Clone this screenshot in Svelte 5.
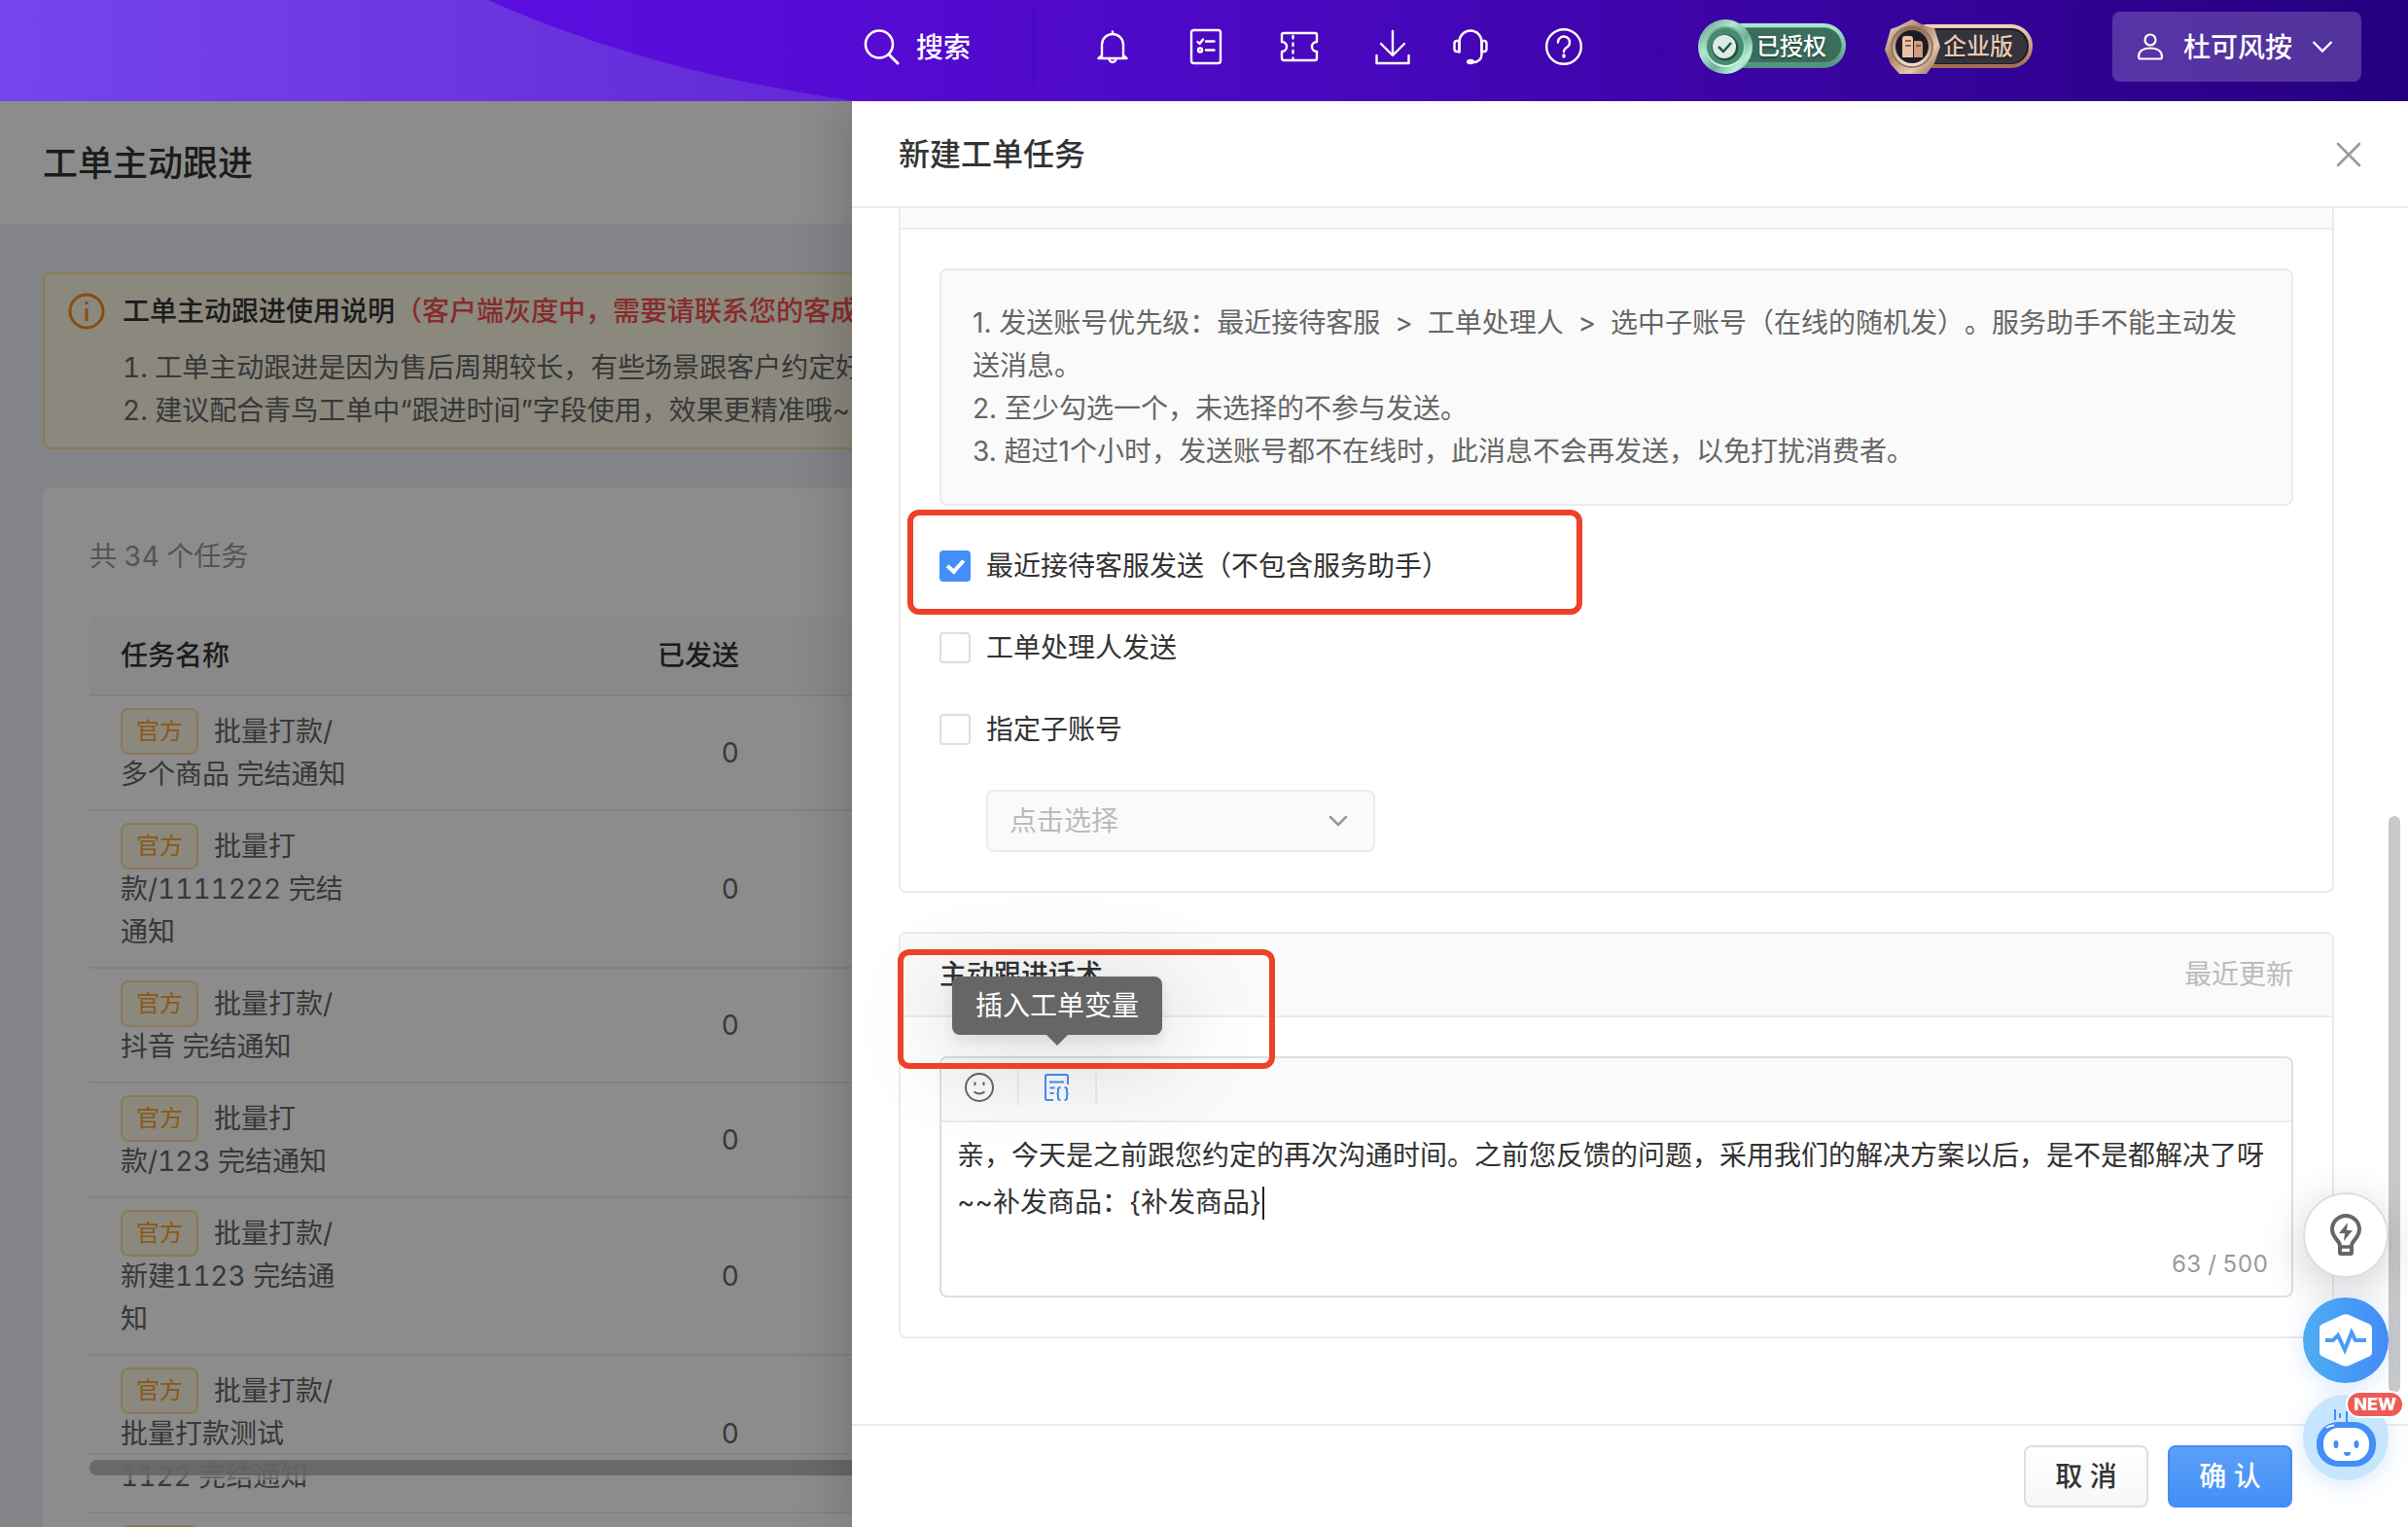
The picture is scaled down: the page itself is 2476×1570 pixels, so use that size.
<script lang="ts">
	const tasks = [
		{ name: '批量打款/多个商品 完结通知', sent: 0 },
		{ name: '批量打款/1111222 完结通知', sent: 0 },
		{ name: '批量打款/抖音 完结通知', sent: 0 },
		{ name: '批量打款/123 完结通知', sent: 0 },
		{ name: '批量打款/新建1123 完结通知', sent: 0 },
		{ name: '批量打款/批量打款测试 1122 完结通知', sent: 0 },
		{ name: '批量打款/', sent: 0 }
	];

	let senders = $state([
		{ label: '最近接待客服发送（不包含服务助手）', checked: true },
		{ label: '工单处理人发送', checked: false },
		{ label: '指定子账号', checked: false }
	]);

	let message = $state(
		'亲，今天是之前跟您约定的再次沟通时间。之前您反馈的问题，采用我们的解决方案以后，是不是都解决了呀\n~~补发商品：{补发商品} '
	);
	let count = $derived(message.length);
</script>

<div class="app">
	<header class="topbar">
		<svg class="swoosh" viewBox="0 0 880 104" preserveAspectRatio="none" aria-hidden="true">
			<defs>
				<linearGradient id="swoosh" x1="0" x2="1" y1="0" y2="0">
					<stop offset="0" stop-color="#7645ec" />
					<stop offset="1" stop-color="#6228d6" />
				</linearGradient>
			</defs>
			<path d="M0 0H502C610 48 735 84 880 104H0Z" fill="url(#swoosh)" />
		</svg>

		<button class="search">
			<svg width="38" height="38" viewBox="0 0 38 38" fill="none" stroke="#fff" stroke-width="2.6" stroke-linecap="round">
				<circle cx="16" cy="16.500" r="14" />
				<path d="M26 27l9 9" stroke-width="3" />
			</svg>
			<span>搜索</span>
		</button>
		<span class="divider first"></span>

		<nav class="tools">
			<button aria-label="通知">
				<svg viewBox="0 0 40 40">
					<path d="M20 4.500v2M5.500 32h29M9 32V18a11 11 0 0 1 22 0v14M5.500 32l3.500-3M34.500 32L31 29M16.500 32.500a3.500 3.500 0 0 0 7 0" />
				</svg>
			</button>
			<button aria-label="任务">
				<svg viewBox="0 0 40 40">
					<rect x="5" y="3" width="30" height="34" rx="2.500" />
					<path d="M11.500 15l2 2 3.500-4.500M20 14.500h8.500M20 23.500h8.500" />
					<circle cx="14" cy="23.500" r="2" />
				</svg>
			</button>
			<button aria-label="卡券">
				<svg viewBox="0 0 40 40">
					<path d="M4 6h32a2 2 0 0 1 2 2v7a5 5 0 0 0 0 10v7a2 2 0 0 1-2 2H4a2 2 0 0 1-2-2v-7a5 5 0 0 0 0-10V8a2 2 0 0 1 2-2Z" />
					<path d="M13.500 9v23" stroke-dasharray="2.500 5" />
				</svg>
			</button>
			<button aria-label="下载">
				<svg viewBox="0 0 40 40">
					<path d="M20 4v24M8 17l12 12 12-12M3.500 29v8h33v-8" />
				</svg>
			</button>
			<button class="near" aria-label="客服">
				<svg viewBox="0 0 40 40">
					<path d="M8.500 25.500V15a11.500 11.500 0 0 1 23 0v13a8 8 0 0 1-8 8" />
					<path d="M8.500 14H6a2.500 2.500 0 0 0-2.500 2.500v6A2.500 2.500 0 0 0 6 25h2.500zM31.500 14H34a2.500 2.500 0 0 1 2.500 2.500v6A2.500 2.500 0 0 1 34 25h-2.500z" />
					<ellipse cx="20" cy="35.500" rx="2.800" ry="1.500" fill="#fff" />
				</svg>
			</button>
			<button aria-label="帮助">
				<svg viewBox="0 0 40 40">
					<circle cx="20" cy="20" r="17.800" />
					<path d="M14 15.500a6 6 0 1 1 9 5.200c-2 1.200-3 2.200-3 4.500" />
					<path d="M20 29v1" stroke-width="3.500" />
				</svg>
			</button>
		</nav>
		<span class="divider second"></span>

		<div class="medal">
			<svg width="152" height="56" viewBox="0 0 152 56" aria-hidden="true">
				<defs>
					<linearGradient id="gRim" x1="0" x2="0" y1="0" y2="1">
						<stop offset="0" stop-color="#a9eccf" />
						<stop offset="1" stop-color="#4f8e77" />
					</linearGradient>
					<linearGradient id="gRing" x1="0" x2="1" y1="0" y2="1">
						<stop offset="0" stop-color="#4f9077" />
						<stop offset="0.35" stop-color="#b4e8d0" />
						<stop offset="0.6" stop-color="#6bb095" />
						<stop offset="0.8" stop-color="#b8f0d8" />
						<stop offset="1" stop-color="#45846d" />
					</linearGradient>
					<linearGradient id="gInner" x1="0" x2="0" y1="0" y2="1">
						<stop offset="0" stop-color="#6aa78f" />
						<stop offset="1" stop-color="#d2fbe9" />
					</linearGradient>
				</defs>
				<rect x="22" y="4" width="130" height="46" rx="23" fill="url(#gRim)" />
				<rect x="22" y="8" width="126" height="38" rx="19" fill="#56967f" />
				<rect x="22" y="9" width="125" height="35" rx="17" fill="#3b6d5d" />
				<circle cx="28" cy="28" r="28" fill="url(#gRing)" />
				<circle cx="28" cy="28" r="21" fill="url(#gInner)" />
				<circle cx="28" cy="28" r="19" fill="#468a70" />
				<circle cx="28" cy="29" r="13.500" fill="#24503f" />
				<circle cx="27" cy="28" r="12" fill="#dcebe6" />
				<path d="M21 28l5 5 8-9" fill="none" stroke="#2c5647" stroke-width="2.500" />
			</svg>
			<span>已授权</span>
		</div>
		<div class="medal bronze">
			<svg width="152" height="56" viewBox="0 0 152 56" aria-hidden="true">
				<defs>
					<linearGradient id="bRim" x1="0" x2="0" y1="0" y2="1">
						<stop offset="0" stop-color="#f0d6c0" />
						<stop offset="1" stop-color="#a1694c" />
					</linearGradient>
					<linearGradient id="bRing" x1="0" x2="1" y1="0" y2="1">
						<stop offset="0" stop-color="#f6e6d6" />
						<stop offset="0.4" stop-color="#a88367" />
						<stop offset="0.7" stop-color="#e5cbb2" />
						<stop offset="1" stop-color="#80583f" />
					</linearGradient>
					<linearGradient id="bInner" x1="0" x2="0" y1="0" y2="1">
						<stop offset="0" stop-color="#8d674f" />
						<stop offset="1" stop-color="#f3e4d4" />
					</linearGradient>
				</defs>
				<rect x="22" y="5" width="130" height="45" rx="22" fill="url(#bRim)" />
				<rect x="22" y="9" width="126" height="37" rx="18" fill="#1f1d24" />
				<rect x="22" y="11" width="124" height="34" rx="17" fill="#34343c" />
				<path d="M28 0L42 7 51 9 57 28 51 45 43 56H15L6 46 0 31 6 10 14 7Z" fill="url(#bRing)" />
				<circle cx="28" cy="28" r="22" fill="#9a765d" />
				<circle cx="28" cy="28" r="20" fill="url(#bInner)" />
				<circle cx="28" cy="28" r="17" fill="#1e1c22" />
				<path d="M18 20q0-3 3-3h5q3 0 3 3v19H18z" fill="#e9c3ab" />
				<path d="M30 22h6q3 0 3 3v14h-9z" fill="#cf9a7e" />
				<path d="M21 22h6M21 27h6M32 27h5" stroke="#6a4431" stroke-width="1.500" />
			</svg>
			<span>企业版</span>
		</div>
		<span class="divider third"></span>

		<button class="user">
			<svg width="28" height="28" viewBox="0 0 28 28" fill="none" stroke="#fff" stroke-width="2.200">
				<circle cx="14" cy="7" r="5.500" />
				<path d="M2 24.500C2 18.500 7 15.500 14 15.500s12 3 12 9q0 2-2 2H4q-2 0-2-2Z" />
			</svg>
			<span>杜可风按</span>
			<svg width="22" height="14" viewBox="0 0 22 14" fill="none" stroke="#fff" stroke-width="2.400">
				<path d="M1.500 2l9.500 9.500L20.500 2" />
			</svg>
		</button>
	</header>

	<div class="stage">
		<main class="page">
			<div class="page-head"><h1>工单主动跟进</h1></div>

			<div class="page-body">
				<section class="alert">
					<svg width="38" height="38" viewBox="0 0 38 38" fill="none" stroke="#fa8c16" stroke-width="3">
						<circle cx="19" cy="19" r="17" />
						<path d="M19 16v13M19 9v3" />
					</svg>
					<div>
						<h2>工单主动跟进使用说明<em>（客户端灰度中，需要请联系您的客成</em></h2>
						<p>1. 工单主动跟进是因为售后周期较长，有些场景跟客户约定好</p>
						<p>2. 建议配合青鸟工单中“跟进时间”字段使用，效果更精准哦~</p>
					</div>
				</section>

				<section class="list">
					<p class="total">共 34 个任务</p>
					<table>
						<thead>
							<tr>
								<th class="col-name">任务名称</th>
								<th class="col-num">已发送</th>
								<th></th>
							</tr>
						</thead>
						<tbody>
							{#each tasks as task}
								<tr>
									<td><div class="name"><span class="tag">官方</span>{task.name}</div></td>
									<td class="col-num">{task.sent}</td>
									<td></td>
								</tr>
							{/each}
						</tbody>
					</table>
				</section>
			</div>

			<div class="hscroll" aria-hidden="true"><div></div></div>
		</main>

		<div class="mask"></div>

		<aside class="drawer">
			<div class="drawer-head">
				<h2>新建工单任务</h2>
				<button aria-label="关闭">
					<svg width="26" height="26" viewBox="0 0 26 26" stroke="#999" stroke-width="2.600" stroke-linecap="round">
						<path d="M2 2l22 22M24 2L2 24" />
					</svg>
				</button>
			</div>

			<div class="drawer-body">
				<section class="panel cut">
					<div class="panel-head"></div>
					<div class="panel-body">
						<div class="hint">
							<p>
								1. 发送账号优先级：最近接待客服 <span class="gt">&gt;</span> 工单处理人 <span class="gt">&gt;</span> 选中子账号（在线的随机发）。服务助手不能主动发送消息。
							</p>
							<p>2. 至少勾选一个，未选择的不参与发送。</p>
							<p>3. 超过1个小时，发送账号都不在线时，此消息不会再发送，以免打扰消费者。</p>
						</div>

						<div class="senders">
							{#each senders as sender, i}
								<div class="sender">
									<label><input type="checkbox" bind:checked={sender.checked} />{sender.label}</label>
									{#if i === 0}<span class="mark mark-sender"></span>{/if}
								</div>
							{/each}
						</div>

						<div class="picker">
							<select disabled aria-label="指定子账号">
								<option>点击选择</option>
							</select>
							<svg width="20" height="14" viewBox="0 0 20 14" fill="none" stroke="#999" stroke-width="2.600" stroke-linecap="round">
								<path d="M2 3l8 8 8-8" />
							</svg>
						</div>
					</div>
				</section>

				<section class="panel">
					<div class="panel-head">
						<h3>主动跟进话术</h3>
						<span>最近更新</span>
					</div>
					<div class="panel-body">
						<div class="editor">
							<div class="toolbar">
								<button aria-label="表情">
									<svg width="32" height="32" viewBox="0 0 32 32" fill="none" stroke="#666" stroke-width="2">
										<circle cx="16" cy="16" r="14" />
										<path d="M11.500 10.500v3.500M20.500 10.500v3.500M10.500 20.500q5.500 4 11 0" />
									</svg>
								</button>
								<button aria-label="插入工单变量">
									<svg width="32" height="32" viewBox="0 0 32 32" fill="none" stroke="#448ef7" stroke-width="2">
										<path d="M12 29H5.500q-1.500 0-1.500-1.500v-23Q4 3 5.500 3h20Q27 3 27 4.500V13M8 10.500h15M8.500 16.500h5M8.500 22h4" />
										<path d="M19.500 16q-2.500 0-2.500 2v2.500q0 2-1.500 2 1.500 0 1.500 2V27q0 2 2.500 2M23.500 16q2.500 0 2.500 2v2.500q0 2 1.500 2-1.500 0-1.500 2V27q0 2-2.500 2" />
									</svg>
									<span class="tooltip" role="tooltip">插入工单变量</span>
								</button>
							</div>
							<div class="field">
								<textarea bind:value={message} rows="2" aria-label="主动跟进话术"></textarea>
								<span class="caret"></span>
							</div>
							<div class="count">{count} / 500</div>
						</div>
					</div>
					<span class="mark mark-title"></span>
				</section>

				<span class="thumb" aria-hidden="true"></span>
			</div>

			<div class="drawer-foot">
				<button class="btn">取 消</button>
				<button class="btn primary">确 认</button>
			</div>
		</aside>

		<div class="floats">
			<button class="float bulb" aria-label="建议">
				<svg width="44" height="44" viewBox="0 0 44 44">
					<path d="M16 33c0-6-8-8-8-17a14 14 0 0 1 28 0c0 9-8 11-8 17v7q0 1-1 1H17q-1 0-1-1z" fill="none" stroke="#666" stroke-width="4" />
					<path d="M16 34h12" stroke="#666" stroke-width="3.500" />
					<path d="M24 9L15 20h6l-1 8 9-11h-6z" fill="#666" />
				</svg>
			</button>
			<button class="float pulse" aria-label="诊断">
				<svg width="56" height="56" viewBox="0 0 56 56">
					<path d="M24.500 2q3.500-1.500 7 0l21 9.500q2.500 1.500 2.500 4v25q0 2.500-2.500 4l-21 9.500q-3.500 1.500-7 0l-21-9.500q-2.500-1.500-2.500-4v-25q0-2.500 2.500-4z" fill="#fff" />
					<path d="M7 28h8l5-5 7 15 7-18 4 8h11" fill="none" stroke="#4a9df5" stroke-width="4" />
				</svg>
			</button>
			<button class="float robot" aria-label="智能助手">
				<svg width="88" height="88" viewBox="0 0 88 88">
					<path d="M33 15v11M38 19v5M45 17v12M55 17v4" stroke="#448ef7" stroke-width="2" />
					<rect x="14" y="28" width="61" height="46" rx="22" fill="#448ef7" />
					<rect x="21" y="34" width="47" height="34" rx="16" fill="#fff" />
					<path d="M24 34q4-2.500 8-2.500" stroke="#fff" stroke-width="2" fill="none" />
					<ellipse cx="34" cy="51" rx="2.500" ry="4" fill="#448ef7" />
					<ellipse cx="55" cy="51" rx="2.500" ry="4" fill="#448ef7" />
					<path d="M42 59h7q0 4-3.500 4T42 59z" fill="#448ef7" />
				</svg>
				<span class="new">NEW</span>
			</button>
		</div>
	</div>
</div>

<style>
	:global(body) {
		margin: 0;
	}

	.app {
		height: 100vh;
		display: flex;
		flex-direction: column;
		overflow: hidden;
		font-family: Inter, 'Noto Sans CJK SC', sans-serif;
		font-size: 28px;
		line-height: 44px;
		color: #333;
		text-spacing-trim: space-all;
	}

	.app :is(h1, h2, h3, p) {
		margin: 0;
	}

	button {
		font: inherit;
		color: inherit;
		border: 0;
		padding: 0;
		background: none;
		cursor: pointer;
	}

	svg {
		display: block;
		flex: none;
	}

	/* top bar */
	.topbar {
		position: relative;
		flex: none;
		height: 104px;
		box-sizing: border-box;
		padding: 0 48px 8px;
		display: flex;
		align-items: center;
		justify-content: flex-end;
		color: #fff;
		font-weight: 500;
		background: linear-gradient(90deg, #5f0fe6 0%, #5b0fe0 20%, #560bd4 35%, #4707bb 58%, #3d04a8 70%, #25007f 100%);
	}

	.swoosh {
		position: absolute;
		left: 0;
		top: 0;
		width: 880px;
		height: 100%;
	}

	.search {
		display: flex;
		align-items: center;
		gap: 16px;
		z-index: 1;
	}
	.search span,
	.user span {
		padding-top: 2px;
	}

	.divider {
		width: 2px;
		height: 80px;
		background: rgba(30, 0, 120, 0.2);
	}
	.divider.first {
		margin: 0 60px 0 64px;
	}
	.divider.second {
		margin: 0 40px 0 76px;
	}
	.divider.third {
		margin: 0 40px;
	}

	.tools {
		display: flex;
		gap: 56px;
	}
	.tools .near {
		margin-left: -16px;
	}
	.tools svg {
		width: 40px;
		height: 40px;
		fill: none;
		stroke: #fff;
		stroke-width: 2.4;
		stroke-linecap: round;
		stroke-linejoin: round;
	}

	.medal {
		position: relative;
		font-size: 24px;
		font-weight: 500;
	}
	.medal span {
		position: absolute;
		left: 60px;
		top: 6px;
		text-shadow: 0 2px 2px rgba(0, 0, 0, 0.4);
	}
	.bronze {
		margin-left: 40px;
		color: #e8c8b0;
	}

	.user {
		width: 256px;
		height: 72px;
		padding-right: 4px;
		border-radius: 8px;
		background: rgba(255, 255, 255, 0.2);
		display: flex;
		align-items: center;
		justify-content: center;
		gap: 20px;
	}

	/* page behind the drawer */
	.stage {
		position: relative;
		flex: 1;
		min-height: 0;
		overflow: hidden;
	}

	.page {
		height: 100%;
		overflow: hidden;
		background: #eef1f6;
		font-variant-numeric: tabular-nums;
	}

	.page-head {
		padding: 42px 44px 40px;
		background: #fff;
	}
	.page-head h1 {
		font-size: 36px;
		font-weight: 500;
		line-height: 44px;
	}

	.page-body {
		padding: 50px 44px;
		display: flex;
		flex-direction: column;
		gap: 40px;
	}

	.alert {
		display: flex;
		gap: 18px;
		padding: 16px 24px;
		border: 2px solid #fbdf9f;
		border-radius: 8px;
		background: #fdf8e6;
		color: #666;
		white-space: nowrap;
	}
	.alert svg {
		margin-top: 3px;
	}
	.alert h2 {
		margin-bottom: 14px;
		font-size: 28px;
		font-weight: 500;
		color: #333;
	}
	.alert em {
		font-style: normal;
		color: #f5504e;
	}

	.list {
		padding: 48px;
		border-radius: 8px;
		background: #fff;
	}
	.total {
		color: #999;
	}

	table {
		width: 100%;
		margin-top: 40px;
		border-collapse: separate;
		border-spacing: 0;
		table-layout: fixed;
		color: #666;
	}
	th,
	td {
		padding: 14px 32px;
		border-bottom: 2px solid #ebebeb;
		text-align: left;
	}
	th {
		padding: 18px 32px;
		font-weight: 500;
		color: #333;
		background: #fafafa;
	}
	th:first-child {
		border-top-left-radius: 8px;
	}
	th.col-name {
		width: 340px;
	}
	th.col-num {
		width: 232px;
	}
	.col-num {
		text-align: right;
	}
	.name {
		width: 236px;
	}
	.tag {
		display: inline-block;
		height: 44px;
		margin: -2px 16px -2px 0;
		padding: 0 14px;
		border: 2px solid #fbdf9f;
		border-radius: 8px;
		background: #fdf8e6;
		color: #faa32b;
		font-size: 24px;
		vertical-align: top;
	}

	.hscroll {
		position: absolute;
		left: 92px;
		right: 44px;
		bottom: 48px;
		padding: 5px 0;
		border-top: 2px solid #f0f0f0;
		background: rgba(255, 255, 255, 0.6);
	}
	.hscroll div {
		height: 16px;
		border-radius: 8px;
		background: rgba(175, 175, 175, 0.8);
	}

	.mask {
		position: absolute;
		inset: 0;
		background: rgba(0, 0, 0, 0.45);
	}

	/* drawer */
	.drawer {
		position: absolute;
		top: 0;
		right: 0;
		bottom: 0;
		width: min(1600px, 100%);
		display: flex;
		flex-direction: column;
		background: #fff;
		box-shadow: -12px 0 48px rgba(0, 0, 0, 0.16);
	}

	.drawer-head {
		display: flex;
		align-items: center;
		justify-content: space-between;
		padding: 33px 48px 31px;
		border-bottom: 2px solid #ebebeb;
	}
	.drawer-head h2 {
		font-size: 32px;
		font-weight: 500;
	}

	.drawer-body {
		position: relative;
		flex: 1;
		min-height: 0;
		overflow: hidden;
		padding: 0 76px 0 48px;
	}

	.thumb {
		position: absolute;
		right: 8px;
		top: 50%;
		bottom: 32px;
		width: 12px;
		border-radius: 6px;
		background: #c9c9c9;
	}

	.panel {
		position: relative;
		margin-bottom: 40px;
		border: 2px solid #ebebeb;
		border-radius: 8px;
	}
	.panel.cut {
		border-top: 0;
		border-radius: 0 0 8px 8px;
	}
	.panel-head {
		display: flex;
		justify-content: space-between;
		padding: 20px 40px;
		border-bottom: 2px solid #ebebeb;
		border-radius: 6px 6px 0 0;
		background: #fafafa;
	}
	.cut .panel-head {
		padding: 10px 40px;
	}
	.panel-head h3 {
		font-size: 28px;
		font-weight: 500;
	}
	.panel-head span {
		color: #bbb;
	}
	.panel-body {
		padding: 40px;
	}

	.hint {
		padding: 32px;
		border: 2px solid #ebebeb;
		border-radius: 8px;
		background: #fafafa;
		color: #666;
	}
	.gt {
		margin: 0 7px;
	}

	.senders {
		display: flex;
		flex-direction: column;
		gap: 40px;
		margin-top: 40px;
	}
	.sender {
		position: relative;
	}
	.sender label {
		display: flex;
		align-items: center;
		gap: 16px;
	}
	.sender input {
		appearance: none;
		width: 32px;
		height: 32px;
		margin: 0;
		border: 2px solid #dedede;
		border-radius: 4px;
		display: grid;
		place-items: center;
	}
	.sender input:checked {
		border-color: #448ef7;
		background: #448ef7;
	}
	.sender input:checked::after {
		content: '';
		width: 7px;
		height: 13px;
		margin-bottom: 4px;
		border: solid #fff;
		border-width: 0 4px 4px 0;
		transform: rotate(42deg);
	}

	.picker {
		position: relative;
		width: 400px;
		margin: 40px 0 0 48px;
	}
	.picker select {
		display: block;
		width: 100%;
		height: 64px;
		padding: 0 22px;
		appearance: none;
		font: inherit;
		color: #bbb;
		opacity: 1;
		border: 2px solid #ebebeb;
		border-radius: 8px;
		background: #fafafa;
	}
	.picker svg {
		position: absolute;
		right: 28px;
		top: 25px;
	}

	.editor {
		border: 2px solid #dedede;
		border-radius: 8px;
	}
	.toolbar {
		display: flex;
		align-items: center;
		height: 60px;
		padding-bottom: 4px;
		border-bottom: 2px solid #ebebeb;
		border-radius: 6px 6px 0 0;
		background: #fafafa;
	}
	.toolbar button {
		position: relative;
		width: 80px;
		height: 36px;
		display: flex;
		align-items: center;
		justify-content: center;
		border-right: 2px solid #ebebeb;
	}
	.field {
		position: relative;
	}
	textarea {
		display: block;
		width: 100%;
		box-sizing: border-box;
		padding: 10px 16px;
		border: 0;
		outline: 0;
		resize: none;
		overflow: hidden;
		background: none;
		font: inherit;
		line-height: 48px;
		color: #333;
	}
	.caret {
		position: absolute;
		left: 330px;
		bottom: 16px;
		width: 2px;
		height: 34px;
		background: #222;
	}
	.count {
		padding: 8px 24px 10px;
		text-align: right;
		font-size: 24px;
		font-variant-numeric: tabular-nums;
		color: #999;
	}

	.tooltip {
		position: absolute;
		bottom: 72px;
		left: 50%;
		transform: translateX(-50%);
		padding: 8px 24px;
		border-radius: 8px;
		white-space: nowrap;
		color: #fff;
		background: #666;
		box-shadow:
			0 6px 12px rgba(0, 0, 0, 0.08),
			0 18px 96px 16px rgba(0, 0, 0, 0.12);
	}
	.tooltip::after {
		content: '';
		position: absolute;
		top: 100%;
		left: 50%;
		margin-left: -11px;
		border: 11px solid transparent;
		border-bottom: 0;
		border-top-color: #666;
	}

	/* hand-drawn highlight frames */
	.mark {
		position: absolute;
		border: 6px solid #ee4128;
		border-radius: 12px;
		pointer-events: none;
	}
	.mark-sender {
		left: -33px;
		top: -36px;
		width: 682px;
		height: 96px;
	}
	.mark-title {
		left: -3px;
		top: 16px;
		width: 376px;
		height: 111px;
	}

	.drawer-foot {
		display: flex;
		justify-content: flex-end;
		gap: 20px;
		padding: 20px 119px 20px 48px;
		border-top: 2px solid #ebebeb;
	}
	.btn {
		width: 128px;
		height: 64px;
		border: 2px solid #dedede;
		border-radius: 8px;
		font-weight: 500;
		background: linear-gradient(#fff, #f7f7f7);
	}
	.primary {
		border-color: #448ef7;
		color: #fff;
		background: linear-gradient(#5ba0f8, #448ef7);
	}

	/* floating helpers */
	.floats {
		position: absolute;
		right: 20px;
		bottom: 48px;
		display: flex;
		flex-direction: column;
		gap: 12px;
	}
	.float {
		position: relative;
		width: 88px;
		height: 88px;
		border-radius: 50%;
		display: grid;
		place-items: center;
		box-shadow: 0 4px 24px rgba(68, 142, 247, 0.2);
	}
	.bulb {
		margin-bottom: 8px;
		border: 2px solid #dedede;
		background: #fff;
		box-shadow: 0 12px 48px rgba(0, 0, 0, 0.2);
	}
	.pulse {
		background: linear-gradient(90deg, #4eaef2, #448af8);
	}
	.robot {
		background: #c5e6fd;
	}
	.new {
		position: absolute;
		top: -4px;
		right: -16px;
		padding: 0 6px;
		border: 2px solid #fff;
		border-radius: 14px;
		background: #ee5b55;
		color: #fff;
		font-size: 18px;
		font-weight: 800;
		line-height: 24px;
	}
</style>
